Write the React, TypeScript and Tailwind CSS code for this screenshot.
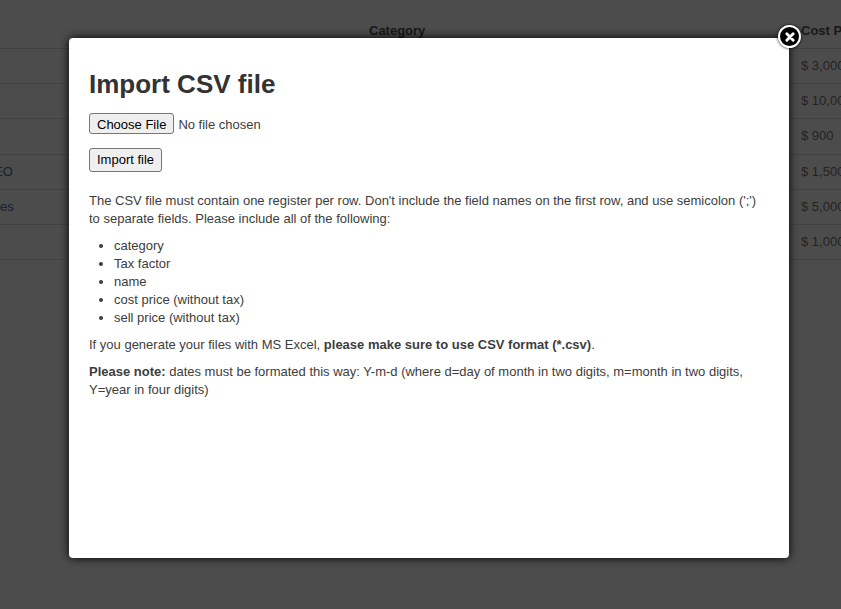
const rows = [
  { name: '', cost: '$ 3,000.00' },
  { name: '', cost: '$ 10,000.00' },
  { name: '', cost: '$ 900' },
  { name: 'EO', cost: '$ 1,500.00', shift: true },
  { name: 'es', cost: '$ 5,000.00' },
  { name: '', cost: '$ 1,000.00' },
];

const fields = ['category', 'Tax factor', 'name', 'cost price (without tax)', 'sell price (without tax)'];

const App = () => {
  return (
    <div className="relative h-screen w-full overflow-hidden bg-white font-['Liberation_Sans',Arial,sans-serif] text-[13px] text-[#777]">
      {/* Table behind the overlay */}
      <div className="w-[960px] pt-[13px]">
        <div className="flex h-[36px] items-start border-b border-[#ddd] pt-[9px] font-bold leading-[18px] text-[#555]">
          <div className="w-[369px]"></div>
          <div className="w-[432px]">Category</div>
          <div>Cost Price</div>
        </div>
        {rows.map((row, i) => (
          <div key={i} className="flex h-[35.2px] items-start border-b border-[#ddd] pt-[8px] leading-[18px]">
            <div className="w-[801px] text-[#5a6a9a]">
              <span className={row.shift ? 'ml-[-6px]' : ''}>{row.name}</span>
            </div>
            <div>{row.cost}</div>
          </div>
        ))}
      </div>

      {/* Modal */}
      <div className="absolute inset-0 bg-black/70">
        <div className="relative ml-[69px] mt-[38px] h-[520px] w-[720px] rounded-[4px] bg-white px-5 text-[#3d3d3d] shadow-[0_0_10px_#000]">
          <h1 className="pt-[29px] text-[26px] leading-[34px] font-bold text-[#333]">Import CSV file</h1>

          <input
            type="file"
            className="mt-[12px] block text-[13px] leading-[21px] file:mr-[4px] file:h-[21px] file:rounded-[3px] file:border file:border-[#767676] file:bg-[#efefef] file:px-[7px] file:text-[13px] file:text-black"
          />
          <button className="mt-[13px] block h-[24px] rounded-[3px] border border-[#767676] bg-[#efefef] px-[7px] text-[13px] text-black">
            Import file
          </button>

          <p className="mt-[20px] leading-[18px]">
            The CSV file must contain one register per row. Don't include the field names on the first row, and use semicolon (';') to separate fields. Please include all of the following:
          </p>
          <ul className="mt-[9px] list-disc pl-[25px] leading-[18px]">
            {fields.map((field) => (
              <li key={field}>{field}</li>
            ))}
          </ul>
          <p className="mt-[9px] leading-[18px]">
            If you generate your files with MS Excel, <b>please make sure to use CSV format (*.csv)</b>.
          </p>
          <p className="mt-[9px] leading-[18px]">
            <b>Please note:</b> dates must be formated this way: Y-m-d (where d=day of month in two digits, m=month in two digits, Y=year in four digits)
          </p>

          {/* Close */}
          <button className="absolute right-[-12px] top-[-13px] flex h-[23px] w-[23px] items-center justify-center rounded-full border-[2px] border-white bg-black shadow-[0_0_3px_#000]">
            <svg viewBox="0 0 12 12" className="h-[10px] w-[10px]">
              <path d="M2.2 2.2 L9.8 9.8 M9.8 2.2 L2.2 9.8" stroke="#fff" strokeWidth="3.4" strokeLinecap="round" />
            </svg>
          </button>
        </div>
      </div>
    </div>
  );
};

export default App;
